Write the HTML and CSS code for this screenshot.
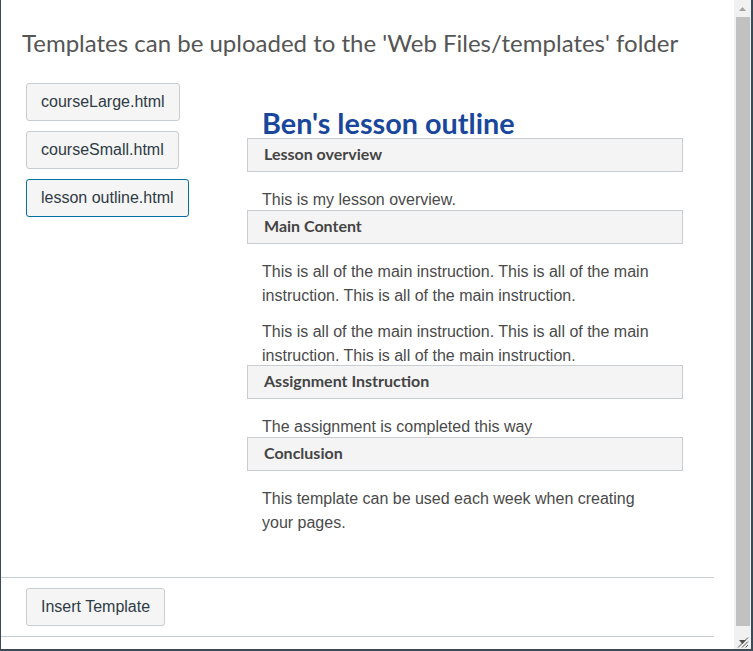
FILE: index.html
```html
<!DOCTYPE html>
<html lang="en">
<head>
<meta charset="utf-8">
<title>Templates</title>
<link rel="stylesheet" href="styles.css">
</head>
<body>
<div class="dialog">
  <div class="body">
    <h1 class="title">Templates can be uploaded to the 'Web Files/templates' folder</h1>
    <div class="row">
      <div class="list">
        <button class="btn">courseLarge.html</button>
        <button class="btn">courseSmall.html</button>
        <button class="btn focused">lesson outline.html</button>
      </div>
      <div class="preview">
        <h2 class="pv-title">Ben's lesson outline</h2>
        <h3 class="pv-head">Lesson overview</h3>
        <p>This is my lesson overview.</p>
        <h3 class="pv-head">Main Content</h3>
        <p>This is all of the main instruction. This is all of the main instruction. This is all of the main instruction.</p>
        <p>This is all of the main instruction. This is all of the main instruction. This is all of the main instruction.</p>
        <h3 class="pv-head">Assignment Instruction</h3>
        <p>The assignment is completed this way</p>
        <h3 class="pv-head">Conclusion</h3>
        <p>This template can be used each week when creating your pages.</p>
      </div>
    </div>
    <div class="footer">
      <button class="btn">Insert Template</button>
    </div>
  </div>
  <div class="scrollbar">
    <div class="sb-up">
      <svg width="7" height="4" viewBox="0 0 7 4"><path d="M3.5 0 L7 4 L0 4 Z" fill="#a3a3a3"/></svg>
    </div>
    <div class="sb-thumb"></div>
    <div class="sb-bottom">
      <svg width="12" height="11" viewBox="0 0 12 11">
        <path d="M2 3 L9 3 L5.5 7 Z" fill="#505050"/>
        <path d="M1 10.5 L11 0.5" stroke="#505050" stroke-width="1"/>
        <path d="M5 10.5 L11 4.5" stroke="#505050" stroke-width="1"/>
        <path d="M8.5 10.5 L11 8" stroke="#505050" stroke-width="1"/>
      </svg>
    </div>
  </div>
</div>
</body>
</html>
```

FILE: styles.css
```css
html, body {
  margin: 0;
  padding: 0;
}

body {
  width: 753px;
  height: 651px;
  overflow: hidden;
  background: #ffffff;
}

.dialog {
  display: flex;
  height: 651px;
  box-sizing: border-box;
  border-left: 1px solid #394b58;
  border-right: 2px solid #394b58;
  border-bottom: 2px solid #394b58;
}

.body {
  width: 733px;
  display: flex;
  flex-direction: column;
}

.title {
  margin: 0;
  padding: 30px 0 0 21px;
  font-family: "Lato", "Open Sans", sans-serif;
  font-weight: 400;
  font-size: 24px;
  line-height: 26px;
  color: #555555;
}

.row {
  flex: 1;
  display: flex;
  align-items: flex-start;
  margin-top: 27px;
  padding-left: 25px;
}

.list {
  width: 221px;
  flex: none;
  display: flex;
  flex-direction: column;
  align-items: flex-start;
  gap: 10px;
}

.btn {
  box-sizing: border-box;
  height: 38px;
  margin: 0;
  padding: 0 14px;
  background: #f5f5f5;
  border: 1px solid #c7cdd1;
  border-radius: 3px;
  font-family: "Liberation Sans", Arial, sans-serif;
  font-size: 16px;
  line-height: 36px;
  color: #2d3b45;
  cursor: pointer;
}

.btn.focused {
  border-color: #0770a3;
}

.preview {
  width: 436px;
  flex: none;
  padding-top: 25px;
}

.pv-title {
  margin: 0;
  padding-left: 15px;
  font-family: "Lato", "Open Sans", sans-serif;
  font-weight: 700;
  font-size: 28.8px;
  line-height: 30px;
  color: #19479b;
}

.pv-head {
  box-sizing: border-box;
  height: 34px;
  margin: 0;
  padding: 0 16px;
  background: #f4f4f4;
  border: 1px solid #c7cdd1;
  font-family: "Lato", "Open Sans", sans-serif;
  font-weight: 700;
  font-size: 16px;
  line-height: 30px;
  color: #444444;
}

.preview p {
  margin: 16px 0 0;
  padding: 0 15px;
  font-family: "Liberation Sans", Arial, sans-serif;
  font-size: 16px;
  line-height: 24px;
  color: #4a4a4a;
}

.preview p + p {
  margin-top: 12px;
}

.preview p + .pv-head {
  margin-top: -2.5px;
}

.footer {
  margin: 0 20px 12px 0;
  padding: 10px 0 10px 25px;
  border-top: 1px solid #c7cdd1;
  border-bottom: 1px solid #c7cdd1;
}

.scrollbar {
  width: 17px;
  flex: none;
  background: #f1f1f1;
  display: flex;
  flex-direction: column;
}

.sb-up {
  height: 17px;
  display: flex;
  justify-content: center;
  align-items: flex-start;
  padding-top: 7px;
  box-sizing: border-box;
}

.sb-thumb {
  flex: 1;
  margin: 0 1px 0 2px;
  background: #c1c1c1;
}

.sb-bottom {
  height: 23px;
  display: flex;
  justify-content: center;
  align-items: flex-end;
  padding-bottom: 1px;
  box-sizing: border-box;
}
```
